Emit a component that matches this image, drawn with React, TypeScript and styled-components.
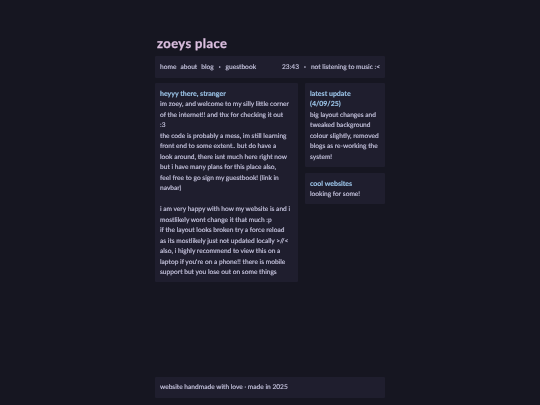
import styled, { createGlobalStyle } from "styled-components";

const GlobalStyle = createGlobalStyle`
  html, body {
    margin: 0;
    padding: 0;
    background: #161621;
  }
  * {
    box-sizing: border-box;
  }
`;

const Page = styled.div`
  width: 230px;
  height: 405px;
  margin: 0 auto;
  padding-top: 35px;
  display: flex;
  flex-direction: column;
  font-family: "Lato", "Noto Sans", sans-serif;
  font-size: 6.6px;
  font-weight: 500;
  line-height: 10.5px;
  color: #c4c2dc;
  text-rendering: geometricPrecision;
  -webkit-text-stroke: 0.12px currentColor;
  filter: blur(0.3px);
`;

const Title = styled.h1`
  margin: 0 0 4px 2px;
  height: 17px;
  font-size: 13px;
  line-height: 17px;
  font-weight: 700;
  letter-spacing: 0.4px;
  color: #dcbfe0;
  -webkit-text-stroke: 0.25px currentColor;
`;

const Panel = styled.div`
  background: #1f1e2e;
  border-radius: 1px;
`;

const NavBar = styled(Panel)`
  height: 22px;
  padding: 0 5px;
  display: flex;
  align-items: center;
  justify-content: space-between;
`;

const NavGroup = styled.div`
  display: flex;
  gap: 4px;
`;

const Dot = styled.span`
  font-weight: 900;
  padding: 0 1px;
`;

const Columns = styled.div`
  margin-top: 5px;
  display: grid;
  grid-template-columns: 143px 80px;
  column-gap: 7px;
  align-items: start;
  flex: 1;
`;

const Side = styled.div`
  display: flex;
  flex-direction: column;
  gap: 6.5px;
`;

const Card = styled(Panel)`
  padding: 5.5px 5px 4.5px;
`;

const Heading = styled.h2`
  margin: 0;
  font-size: 7px;
  line-height: 10.5px;
  font-weight: 700;
  color: #9cc4e8;
`;

const Text = styled.p`
  margin: 0;
`;

const IntroText = styled(Text)`
  white-space: pre;
`;

const Footer = styled(Panel)`
  height: 21px;
  margin-bottom: 7px;
  padding: 0 5px;
  display: flex;
  align-items: center;
`;

const intro = `im zoey, and welcome to my silly little corner
of the internet!! and thx for checking it out
:3
the code is probably a mess, im still learning
front end to some extent.. but do have a
look around, there isnt much here right now
but i have many plans for this place also,
feel free to go sign my guestbook! (link in
navbar)

i am very happy with how my website is and i
mostlikely wont change it that much :p
if the layout looks broken try a force reload
as its mostlikely just not updated locally >//<
also, i highly recommend to view this on a
laptop if you're on a phone!! there is mobile
support but you lose out on some things`;

export default function App() {
  return (
    <>
      <GlobalStyle />
      <Page>
        <Title>zoeys place</Title>
        <NavBar>
          <NavGroup>
            <span>home</span>
            <span>about</span>
            <span>blog</span>
            <Dot>·</Dot>
            <span>guestbook</span>
          </NavGroup>
          <NavGroup>
            <span>23:43</span>
            <Dot>·</Dot>
            <span>not listening to music :&lt;</span>
          </NavGroup>
        </NavBar>
        <Columns>
          <Card>
            <Heading>heyyy there, stranger</Heading>
            <IntroText>{intro}</IntroText>
          </Card>
          <Side>
            <Card>
              <Heading>latest update (4/09/25)</Heading>
              <Text>big layout changes and tweaked background colour slightly, removed blogs as re-working the system!</Text>
            </Card>
            <Card>
              <Heading>cool websites</Heading>
              <Text>looking for some!</Text>
            </Card>
          </Side>
        </Columns>
        <Footer>website handmade with love · made in 2025</Footer>
      </Page>
    </>
  );
}
